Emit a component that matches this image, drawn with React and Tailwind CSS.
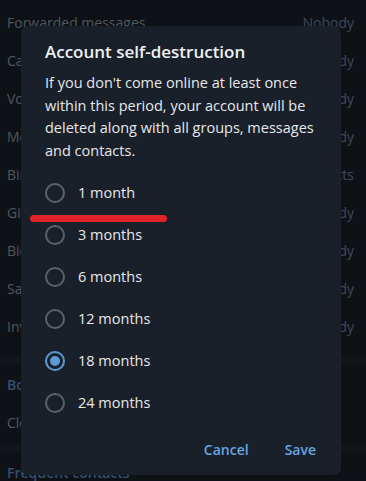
import React, { useState } from 'react';

const rows = [
  ['Forwarded messages', 'Nobody'],
  ['Calls', 'Nobody'],
  ['Voice messages', 'Nobody'],
  ['Messages', 'Nobody'],
  ['Birthday', 'My contacts'],
  ['Gifts', 'Nobody'],
  ['Bio', 'Nobody'],
  ['Saved music', 'Nobody'],
  ['Invites', 'Nobody'],
];

const periods = ['1 month', '3 months', '6 months', '12 months', '18 months', '24 months'];

export default function App() {
  const [selected, setSelected] = useState('18 months');

  return (
    <div
      className="relative w-[366px] h-[481px] overflow-hidden bg-[#0e1217] text-[14px]"
      style={{ fontFamily: '"Open Sans", "Noto Sans", sans-serif' }}
    >
      {/* settings list behind the dimmed overlay */}
      <div className="pt-[3px]">
        {rows.map(([label, value]) => (
          <div key={label} className="h-[38px] flex items-center justify-between pl-[7px] pr-[12px] text-[#50575f]">
            <span>{label}</span>
            <span className="text-[#3b4a5b]">{value}</span>
          </div>
        ))}
        <div className="h-[8px] mt-[12px] bg-[#12161b]" />
        <div className="h-[38px] flex items-center pl-[7px] text-[#34506e] font-semibold">Bots and websites</div>
        <div className="h-[38px] flex items-center pl-[7px] text-[#50575f]">Clear payment and shipping info</div>
        <div className="h-[8px] mt-[4px] bg-[#12161b]" />
        <div className="h-[38px] flex items-center pl-[7px] text-[#34506e] font-semibold">Frequent contacts</div>
      </div>

      {/* dialog */}
      <div className="absolute left-[21px] top-[26px] w-[320px] h-[449px] rounded-[7px] bg-[#19202a] px-[24px] pt-[13px]">
        <div className="text-[17px] font-semibold text-[#eef0f2] leading-[26px]">Account self-destruction</div>
        <p className="mt-[7px] text-[14.5px] leading-[22.5px] text-[#e6e8ea]">
          If you don't come online at least once within this period, your account will be deleted along with all groups, messages and contacts.
        </p>
        <div className="mt-[10px]">
          {periods.map((p) => {
            const on = p === selected;
            return (
              <button
                key={p}
                onClick={() => setSelected(p)}
                className="h-[42px] w-full flex items-center gap-[13px] text-left"
              >
                <span
                  className={`w-[20px] h-[20px] rounded-full border-2 flex items-center justify-center ${
                    on ? 'border-[#5b9ad6]' : 'border-[#59626c]'
                  }`}
                >
                  {on && <span className="w-[10px] h-[10px] rounded-full bg-[#5b9ad6]" />}
                </span>
                <span className="text-[14.5px] text-[#e6e8ea]">{p}</span>
              </button>
            );
          })}
        </div>
        <div className="absolute right-[25px] bottom-[15px] flex gap-[36px] text-[14px] font-semibold text-[#67a6e0]">
          <button>Cancel</button>
          <button>Save</button>
        </div>
      </div>

      {/* red annotation stroke */}
      <div className="absolute left-[30px] top-[215px] w-[137px] h-[7px] rounded-full bg-[#df2329]" />
    </div>
  );
}
